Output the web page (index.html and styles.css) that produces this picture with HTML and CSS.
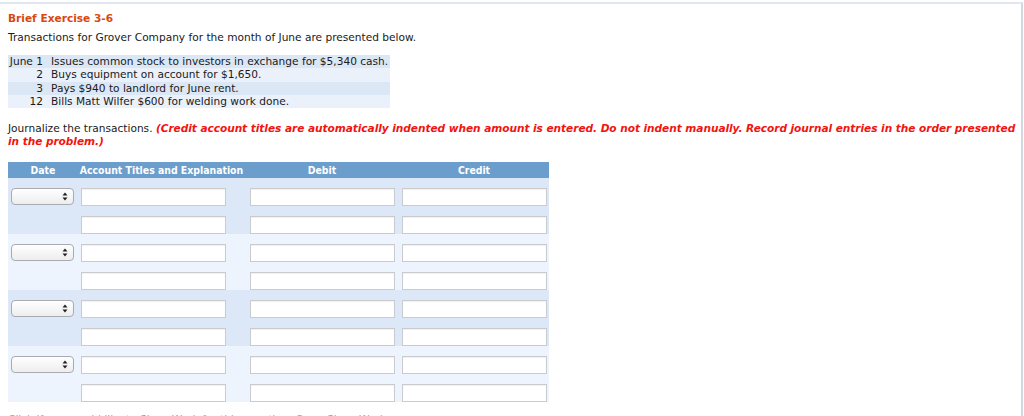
FILE: index.html
```html
<!DOCTYPE html>
<html>
<head>
<meta charset="utf-8">
<link rel="stylesheet" href="styles.css">
</head>
<body>
<div class="page">
  <div class="title">Brief Exercise 3-6</div>
  <div class="intro">Transactions for Grover Company for the month of June are presented below.</div>
  <div class="tx">
    <div class="tx-row dark"><span class="tx-date">June 1</span><span class="tx-desc">Issues common stock to investors in exchange for $5,340 cash.</span></div>
    <div class="tx-row light"><span class="tx-date">2</span><span class="tx-desc">Buys equipment on account for $1,650.</span></div>
    <div class="tx-row dark"><span class="tx-date">3</span><span class="tx-desc">Pays $940 to landlord for June rent.</span></div>
    <div class="tx-row light"><span class="tx-date">12</span><span class="tx-desc">Bills Matt Wilfer $600 for welding work done.</span></div>
  </div>
  <div class="instr">Journalize the transactions. <span class="warn">(Credit account titles are automatically indented when amount is entered. Do not indent manually. Record journal entries in the order presented in the problem.)</span></div>

  <div class="journal">
    <div class="jhead">
      <div class="hc">Date</div>
      <div class="hc">Account Titles and Explanation</div>
      <div class="hc">Debit</div>
      <div class="hc">Credit</div>
    </div>

    <div class="group dark">
      <div class="jrow">
        <div class="c-date"><div class="sel"><svg class="arr" width="6" height="9" viewBox="0 0 6 9"><path d="M3 0.5L5.5 3.6H0.5Z M3 8.5L5.5 5.4H0.5Z" fill="#222"/></svg></div></div>
        <div class="c-acct"><input class="inp" type="text"></div>
        <div class="c-deb"><input class="inp" type="text"></div>
        <div class="c-cred"><input class="inp" type="text"></div>
      </div>
      <div class="jrow">
        <div class="c-date"></div>
        <div class="c-acct"><input class="inp" type="text"></div>
        <div class="c-deb"><input class="inp" type="text"></div>
        <div class="c-cred"><input class="inp" type="text"></div>
      </div>
    </div>

    <div class="group light">
      <div class="jrow">
        <div class="c-date"><div class="sel"><svg class="arr" width="6" height="9" viewBox="0 0 6 9"><path d="M3 0.5L5.5 3.6H0.5Z M3 8.5L5.5 5.4H0.5Z" fill="#222"/></svg></div></div>
        <div class="c-acct"><input class="inp" type="text"></div>
        <div class="c-deb"><input class="inp" type="text"></div>
        <div class="c-cred"><input class="inp" type="text"></div>
      </div>
      <div class="jrow">
        <div class="c-date"></div>
        <div class="c-acct"><input class="inp" type="text"></div>
        <div class="c-deb"><input class="inp" type="text"></div>
        <div class="c-cred"><input class="inp" type="text"></div>
      </div>
    </div>

    <div class="group dark">
      <div class="jrow">
        <div class="c-date"><div class="sel"><svg class="arr" width="6" height="9" viewBox="0 0 6 9"><path d="M3 0.5L5.5 3.6H0.5Z M3 8.5L5.5 5.4H0.5Z" fill="#222"/></svg></div></div>
        <div class="c-acct"><input class="inp" type="text"></div>
        <div class="c-deb"><input class="inp" type="text"></div>
        <div class="c-cred"><input class="inp" type="text"></div>
      </div>
      <div class="jrow">
        <div class="c-date"></div>
        <div class="c-acct"><input class="inp" type="text"></div>
        <div class="c-deb"><input class="inp" type="text"></div>
        <div class="c-cred"><input class="inp" type="text"></div>
      </div>
    </div>

    <div class="group light">
      <div class="jrow">
        <div class="c-date"><div class="sel"><svg class="arr" width="6" height="9" viewBox="0 0 6 9"><path d="M3 0.5L5.5 3.6H0.5Z M3 8.5L5.5 5.4H0.5Z" fill="#222"/></svg></div></div>
        <div class="c-acct"><input class="inp" type="text"></div>
        <div class="c-deb"><input class="inp" type="text"></div>
        <div class="c-cred"><input class="inp" type="text"></div>
      </div>
      <div class="jrow">
        <div class="c-date"></div>
        <div class="c-acct"><input class="inp" type="text"></div>
        <div class="c-deb"><input class="inp" type="text"></div>
        <div class="c-cred"><input class="inp" type="text"></div>
      </div>
    </div>
  </div>
  <div class="foot">Click if you would like to Show Work for this question: Open Show Work</div>
</div>
</body>
</html>
```

FILE: styles.css
```css
html, body {
  margin: 0;
  padding: 0;
  background: #ffffff;
  overflow: hidden;
}
body {
  font-family: "DejaVu Sans", Verdana, sans-serif;
  font-size: 10.6px;
  color: #1a1a1a;
}
.page {
  margin-top: 2px;
  width: 1023px;
  height: 420px;
  box-sizing: border-box;
  border-top: 2px solid #e2e7ef;
  border-right: 2px solid #d3d7de;
  padding: 7px 0 0 8px;
}
.title {
  font-size: 10.6px;
  font-weight: bold;
  color: #d9480f;
  line-height: 15px;
}
.intro {
  margin-top: 4px;
  line-height: 14px;
}
.tx {
  margin-top: 11px;
  width: 382px;
}
.tx-row {
  display: flex;
  height: 13.25px;
  line-height: 13px;
}
.tx-row.dark { background: #dce7f5; }
.tx-row.light { background: #eaf1fb; }
.tx-date {
  width: 35px;
  text-align: right;
  flex: none;
}
.tx-desc {
  padding-left: 8px;
}
.instr {
  margin-top: 14px;
  line-height: 13px;
  width: 1008px;
}
.warn {
  color: #f2140f;
  font-weight: bold;
  font-style: italic;
  letter-spacing: -0.06px;
}
.journal {
  margin-top: 14px;
  width: 541px;
}
.jhead, .jrow {
  display: grid;
  grid-template-columns: 70px 167px 154px 150px;
}
.jhead {
  background: #6b9ecc;
  height: 16px;
  color: #ffffff;
  font-family: "DejaVu Sans Condensed", "DejaVu Sans", sans-serif;
  font-stretch: condensed;
  font-weight: bold;
  font-size: 10.4px;
  line-height: 16px;
}
.hc { text-align: center; }
.group.dark { background: #dce8f8; }
.group.light { background: #edf4fd; }
.jrow {
  height: 28px;
  box-sizing: border-box;
  padding-top: 10px;
}
.c-date { padding-left: 3px; }
.c-acct { padding-left: 3px; }
.c-deb { padding-left: 5px; }
.c-cred { padding-left: 3px; }
.inp {
  display: block;
  width: 145px;
  height: 18px;
  box-sizing: border-box;
  margin: 0;
  padding: 0 3px;
  border: 1px solid #c9cbcf;
  border-radius: 0;
  background: #ffffff;
  box-shadow: inset 0 1px 1px rgba(0,0,0,0.06);
  outline: none;
}
.sel {
  width: 63px;
  height: 17px;
  box-sizing: border-box;
  border: 1px solid #a8abb0;
  border-radius: 4px;
  background: linear-gradient(#ffffff, #ededed);
  display: flex;
  justify-content: flex-end;
  align-items: center;
  padding-right: 5px;
}
.arr { display: block; }
.foot {
  margin-top: 11px;
  color: #a0a4aa;
  font-size: 10.6px;
  line-height: 13px;
}
```
